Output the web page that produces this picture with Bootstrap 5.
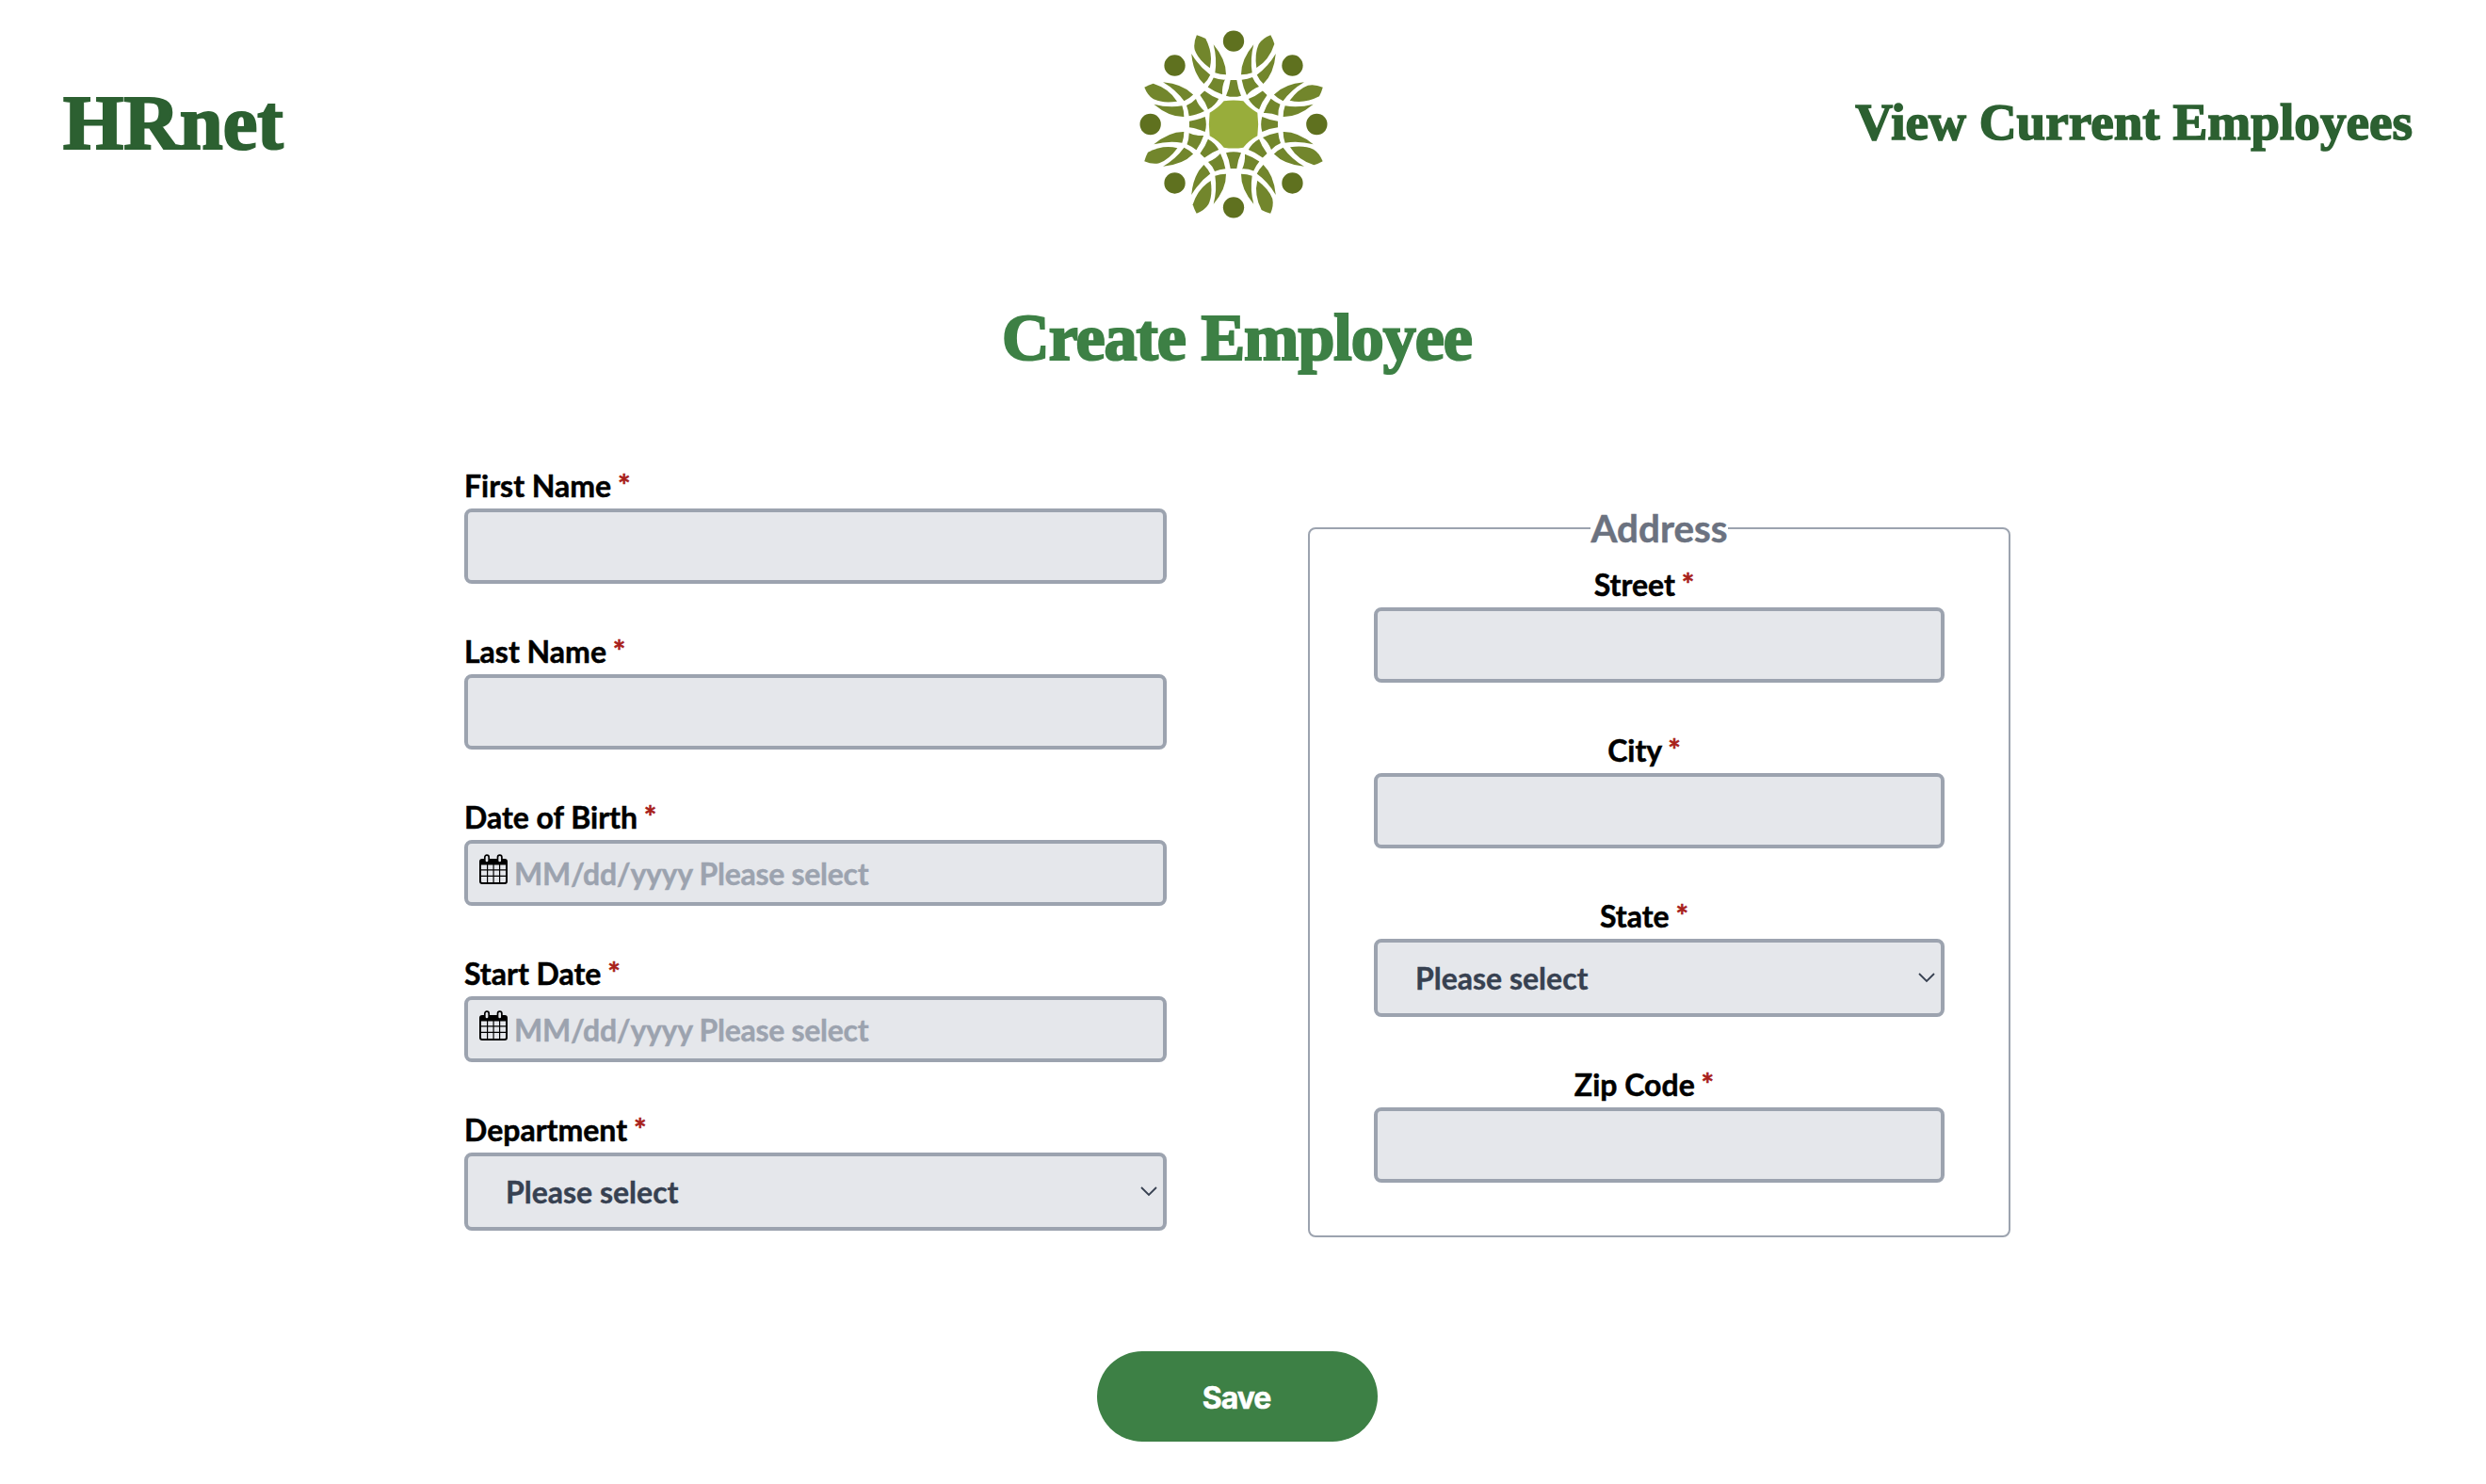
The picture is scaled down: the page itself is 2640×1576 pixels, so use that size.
<!DOCTYPE html>
<html lang="en">
<head>
<meta charset="utf-8">
<title>HRnet</title>
<link href="https://cdn.jsdelivr.net/npm/bootstrap@5.3.0/dist/css/bootstrap.min.css" rel="stylesheet">
<script src="https://cdn.jsdelivr.net/npm/bootstrap@5.3.0/dist/js/bootstrap.bundle.min.js"></script>
<style>
body{font-family:Lato,sans-serif;font-size:32px;line-height:48px;font-weight:700;color:#000;background:#fff;overflow:hidden}
.display-face{font-family:"Liberation Serif",serif;font-weight:700;color:#2c6031;line-height:1;white-space:nowrap;text-decoration:none}
.site-head{height:264px;padding:0 78px 0 57px}
.head-side{flex:1 1 0}
.brand-name{font-size:82.5px;margin-left:10px;padding-bottom:4px;-webkit-text-stroke:2.2px #2c6031}
.head-link{font-size:55.2px;padding-bottom:4px;-webkit-text-stroke:1.6px #2c6031}
.page-title{font-size:70px;letter-spacing:-1px;color:#3d8045;-webkit-text-stroke:2.2px #3d8045;margin:60px 0 96px;height:72px;padding-right:13px}
.form-cols{width:1642px;margin-left:493px;gap:150px}
.form-cols>*{width:746px}
.stack{gap:48px}
label,legend{-webkit-text-stroke:.5px currentColor}
.stack label,.address-set legend{position:static}
.req{color:#a8201a;font-weight:700;margin-left:-1px}
.field{height:80px;border:4px solid #9ca3af!important;border-radius:8px;background-color:#e5e7eb!important;font-size:32px;font-weight:700;line-height:48px;color:#374151;padding:0 40px;-webkit-text-stroke:.4px currentColor}
.field.form-select{height:83px;background-image:url("data:image/svg+xml,%3Csvg xmlns='http://www.w3.org/2000/svg' viewBox='0 0 18 11'%3E%3Cpath d='M1 1l8 8 8-8' fill='none' stroke='%23374151' stroke-width='1.8'/%3E%3C/svg%3E");background-size:18px 11px;background-position:right 6px center}
.field.date-field{height:70px;padding:0 0 0 49px;letter-spacing:-.28px}
.field::placeholder{color:#9ca3af;opacity:1}
.cal-icon{position:absolute;left:16px;top:15px;width:30px;height:33px}
.address-set{border:2px solid #9ca3af;border-radius:8px;padding:6px 68px 56px;margin-top:39px;text-align:center}
.address-set legend{float:none;width:auto;margin:0 auto;padding:0;font-size:40.4px;line-height:60px;color:#6b7280}
.address-set label{padding-right:32px}
.save-row{margin-top:121px;padding-right:12px}
.save-btn,.save-btn:hover{width:298px;height:96px;border-radius:48px;border:0;background:#3d8045;color:#fff;font-family:Inter,sans-serif;font-size:32px;font-weight:700;letter-spacing:-1px;padding:3px 2px 0 0;-webkit-text-stroke:.5px #fff}
</style>
</head>
<body>
<svg width="0" height="0" class="position-absolute" aria-hidden="true">
  <defs>
    <path id="arm" d="M64-254Q23-205 24-158Q43-158 59-164Q52-208 64-254Z"/>
    <g id="unit">
      <circle cy="-265" r="33.5" fill="#5f711f"/>
      <g fill="#72862c">
        <use href="#arm"/><use href="#arm" transform="scale(-1 1)"/>
        <path d="M118-284Q126-270 130-256Q114-205 73-180Q66-225 80-255Q92-274 118-284Z"/>
        <path d="M-10-141H10Q14-112 24-91Q0-84-24-91Q-14-112-10-141Z"/>
        <path d="M26-142Q45-144 60-150Q67-133 81-120Q59-112 42-93Q31-115 26-142Z"/>
      </g>
    </g>
    <g id="cal">
      <path fill="#000" d="M3 5H27Q30 5 30 8V29Q30 32 27 32H3Q0 32 0 29V8Q0 5 3 5Z"/>
      <path fill="#e5e7eb" d="M2 11.500H8V16.200H2ZM9.200 11.500H14.500V16.200H9.200ZM15.700 11.500H21V16.200H15.700ZM22.200 11.500H28V16.200H22.200ZM2 17.400H8V22.700H2ZM9.200 17.400H14.500V22.700H9.200ZM15.700 17.400H21V22.700H15.700ZM22.200 17.400H28V22.700H22.200ZM2 24H8V30H3Q2 30 2 29ZM9.200 24H14.500V30H9.200ZM15.700 24H21V30H15.700ZM22.200 24H28V29Q28 30 27 30H22.200Z"/>
      <rect x="5.800" y="1.200" width="4.400" height="8" rx="2.200" fill="#e5e7eb" stroke="#000" stroke-width="1.700"/>
      <rect x="19.500" y="1.200" width="4.400" height="8" rx="2.200" fill="#e5e7eb" stroke="#000" stroke-width="1.700"/>
    </g>
  </defs>
</svg>

<header class="site-head d-flex align-items-center">
  <div class="head-side d-flex"><span class="display-face brand-name">HRnet</span></div>
  <svg width="200" height="200" viewBox="-300 -300 600 600">
    <path fill="#98ad3b" d="M-31-74Q0-79 31-74Q50-51 76-37Q81 0 76 37Q50 51 31 74Q0 79-31 74Q-50 51-76 37Q-81 0-76-37Q-50-51-31-74Z"/>
    <use href="#unit"/><use href="#unit" transform="rotate(45)"/><use href="#unit" transform="rotate(90)"/><use href="#unit" transform="rotate(135)"/><use href="#unit" transform="rotate(180)"/><use href="#unit" transform="rotate(225)"/><use href="#unit" transform="rotate(270)"/><use href="#unit" transform="rotate(315)"/>
  </svg>
  <nav class="head-side d-flex justify-content-end"><a class="display-face head-link" href="#">View Current Employees</a></nav>
</header>

<main>
  <h1 class="display-face page-title text-center">Create Employee</h1>
  <form>
    <div class="form-cols d-flex align-items-start">
      <div class="stack d-flex flex-column">
        <div><label class="d-block" for="first">First Name <span class="req">*</span></label><input id="first" class="form-control field"></div>
        <div><label class="d-block" for="last">Last Name <span class="req">*</span></label><input id="last" class="form-control field"></div>
        <div><label class="d-block" for="birth">Date of Birth <span class="req">*</span></label>
          <div class="position-relative"><input id="birth" class="form-control field date-field" placeholder="MM/dd/yyyy Please select"><svg class="cal-icon" viewBox="0 0 30 33"><use href="#cal"/></svg></div></div>
        <div><label class="d-block" for="start">Start Date <span class="req">*</span></label>
          <div class="position-relative"><input id="start" class="form-control field date-field" placeholder="MM/dd/yyyy Please select"><svg class="cal-icon" viewBox="0 0 30 33"><use href="#cal"/></svg></div></div>
        <div><label class="d-block" for="dept">Department <span class="req">*</span></label><select id="dept" class="form-select field"><option>Please select</option></select></div>
      </div>
      <fieldset class="address-set">
        <legend>Address</legend>
        <div class="stack d-flex flex-column">
          <div><label class="d-block" for="street">Street <span class="req">*</span></label><input id="street" class="form-control field"></div>
          <div><label class="d-block" for="city">City <span class="req">*</span></label><input id="city" class="form-control field"></div>
          <div><label class="d-block" for="state">State <span class="req">*</span></label><select id="state" class="form-select field"><option>Please select</option></select></div>
          <div><label class="d-block" for="zip">Zip Code <span class="req">*</span></label><input id="zip" class="form-control field"></div>
        </div>
      </fieldset>
    </div>
    <div class="save-row d-flex justify-content-center"><button type="button" class="btn save-btn">Save</button></div>
  </form>
</main>
</body>
</html>
